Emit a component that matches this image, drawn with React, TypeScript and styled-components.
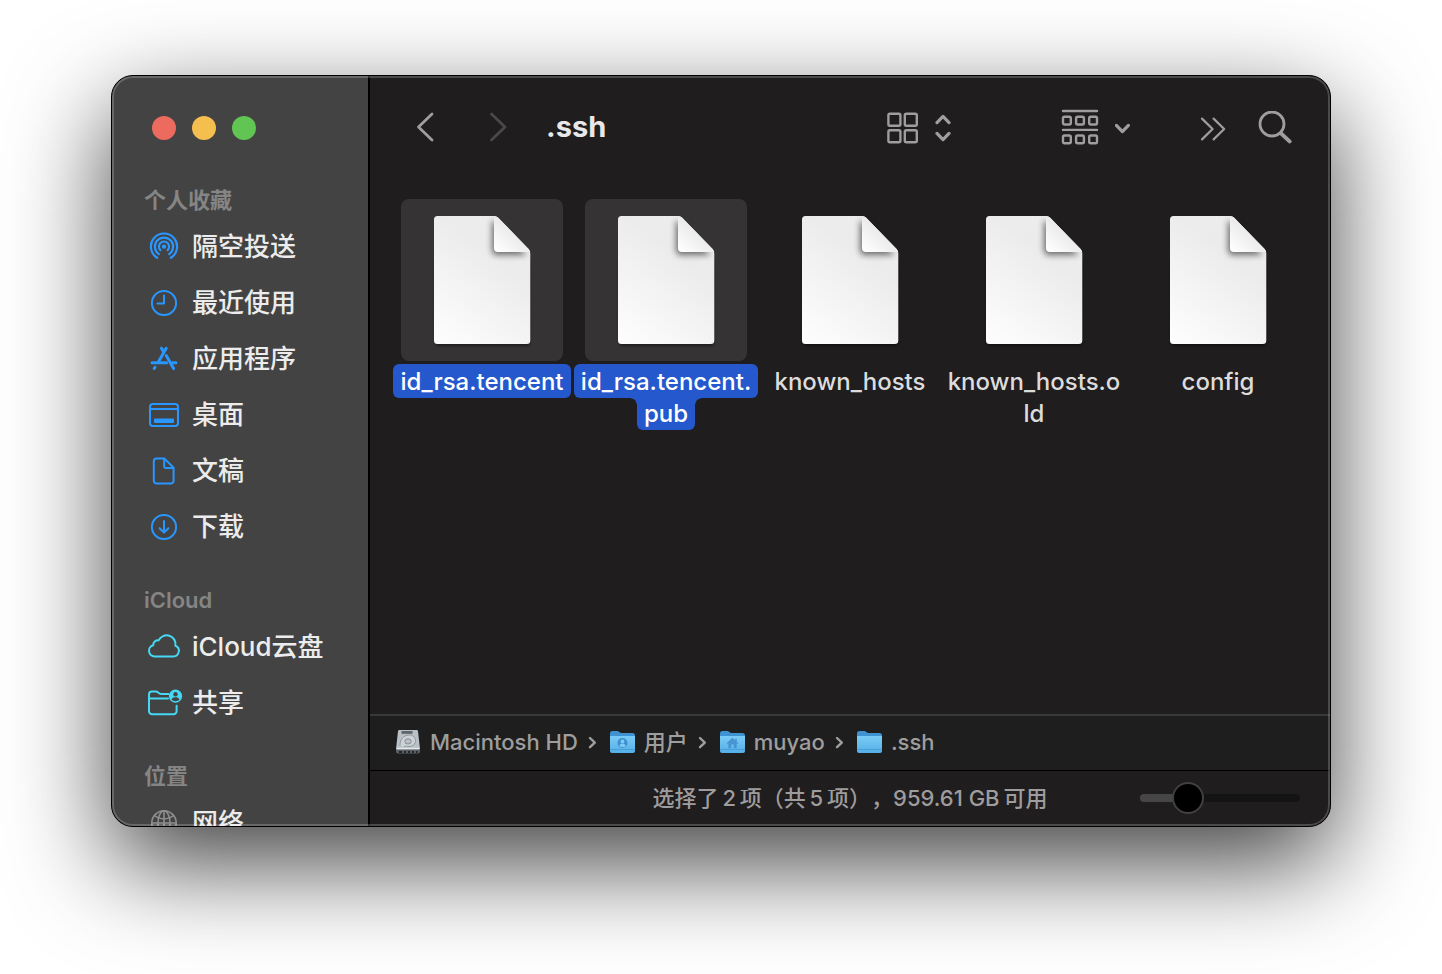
import React from 'react';
import styled, { createGlobalStyle, css } from 'styled-components';

const GlobalStyle = createGlobalStyle`
  * { box-sizing: border-box; }
  body { margin: 0; background: #ffffff; }
  button, input { font: inherit; color: inherit; }
`;

const Desktop = styled.div`
  display: flex;
  height: 100vh;
  padding: 75px 111px 147px;
  overflow: hidden;
  font-family: Inter, 'Noto Sans CJK SC', sans-serif;
  font-weight: 500;
`;

const Window = styled.main`
  position: relative;
  display: flex;
  flex: 1;
  min-width: 0;
  border: 1px solid #000000;
  border-radius: 22px;
  background: #1f1d1e;
  overflow: hidden;
  box-shadow: 0 36px 100px rgba(0, 0, 0, 0.75);

  &::after {
    content: '';
    position: absolute;
    inset: 0;
    border: 2px solid rgba(255, 255, 255, 0.2);
    border-radius: 21px;
    pointer-events: none;
  }
`;

const Sidebar = styled.aside`
  flex: 0 0 258px;
  overflow: hidden;
  border-right: 2px solid #000000;
  background: #434343;
`;

const WindowControls = styled.div`
  display: flex;
  gap: 16px;
  height: 105px;
  padding: 40px 0 0 40px;
`;

const ControlDot = styled.button<{ $color: string }>`
  width: 24px;
  height: 24px;
  padding: 0;
  border: 0;
  border-radius: 50%;
  background: ${(p) => p.$color};
`;

const Section = styled.section`
  margin-bottom: 26px;
`;

const SectionTitle = styled.h2`
  margin: 0;
  padding-left: 32px;
  font-size: 22px;
  font-weight: 600;
  line-height: 38px;
  color: #858585;
`;

const SideList = styled.ul`
  margin: 0;
  padding: 0;
  list-style: none;
`;

const SideLink = styled.a`
  display: flex;
  align-items: center;
  gap: 8px;
  height: 56px;
  padding-left: 32px;
  font-size: 26px;
  line-height: 56px;
  color: #ececec;
  white-space: nowrap;
  text-decoration: none;
`;

const SideIcon = styled.svg<{ $color: string }>`
  flex: none;
  width: 40px;
  height: 32px;
  color: ${(p) => p.$color};
  fill: none;
  stroke: currentColor;
  stroke-width: 2;
  stroke-linecap: round;
  stroke-linejoin: round;
`;

const Content = styled.div`
  display: flex;
  flex: 1;
  flex-direction: column;
  min-width: 0;
`;

const Toolbar = styled.header`
  display: flex;
  align-items: center;
  justify-content: space-between;
  height: 104px;
  padding: 0 38px;
`;

const NavGroup = styled.div`
  display: flex;
  align-items: center;
  gap: 39px;
`;

const ActionGroup = styled.div<{ $gap: number }>`
  display: flex;
  align-items: center;
  gap: ${(p) => p.$gap}px;
`;

const ToolButton = styled.button`
  display: flex;
  align-items: center;
  gap: 16px;
  padding: 0;
  border: 0;
  background: none;
  color: #9f9d9e;

  &:disabled { color: #4a4849; }

  svg {
    display: block;
    fill: none;
    stroke: currentColor;
    stroke-linecap: round;
    stroke-linejoin: round;
  }
`;

const Title = styled.h1`
  margin: 0 0 2px -8px;
  font-size: 29px;
  font-weight: 700;
  line-height: 36px;
  color: #e9e8e9;
`;

const FileGrid = styled.ul`
  display: grid;
  flex: 1;
  grid-template-columns: repeat(auto-fill, 184px);
  align-content: start;
  min-height: 0;
  margin: 0;
  padding: 19px 0 0 20px;
  overflow: hidden;
  list-style: none;
`;

const FileItem = styled.li`
  display: flex;
  flex-direction: column;
  align-items: center;
  gap: 3px;
`;

const IconTile = styled.div<{ $selected: boolean }>`
  width: 162px;
  height: 162px;
  border-radius: 8px;
  background: ${(p) => (p.$selected ? '#353334' : 'transparent')};

  svg { display: block; }
`;

const FileName = styled.div`
  display: flex;
  flex-direction: column;
  align-items: center;
  font-size: 24px;
  line-height: 32px;
  color: #dddcdd;
`;

const selectedLine = css`
  background: #2458cc;
  color: #ffffff;

  &:first-child { border-radius: 6px; }

  & + &::before,
  & + &::after {
    content: '';
    position: absolute;
    top: 0;
    width: 6px;
    height: 6px;
  }
  & + &::before {
    right: 100%;
    background: radial-gradient(circle at 0 100%, transparent 5px, #2458cc 6px);
  }
  & + &::after {
    left: 100%;
    background: radial-gradient(circle at 100% 100%, transparent 5px, #2458cc 6px);
  }
`;

const NameLine = styled.span<{ $selected: boolean }>`
  position: relative;
  padding: 0 7px;
  border-radius: 0 0 6px 6px;

  &:first-child { padding-top: 2px; }
  ${(p) => p.$selected && selectedLine}
`;

const PathBar = styled.nav`
  display: flex;
  align-items: center;
  height: 56px;
  padding: 0 0 2px 24px;
  border-top: 2px solid #3a3939;
  background: #1e1e1e;
  font-size: 22px;
  line-height: 32px;
  color: #9e9e9e;
`;

const Crumb = styled.a`
  display: flex;
  align-items: center;
  gap: 8px;
  color: inherit;
  text-decoration: none;
  white-space: nowrap;

  svg { display: block; }
`;

const CrumbArrow = styled.svg`
  width: 30px;
  height: 16px;
  fill: none;
  stroke: #9e9e9e;
  stroke-width: 2.4;
  stroke-linecap: round;
  stroke-linejoin: round;
`;

const StatusBar = styled.footer`
  display: grid;
  grid-template-columns: 1fr auto 1fr;
  align-items: center;
  height: 56px;
  padding: 0 30px 2px;
  border-top: 1px solid #000000;
`;

const StatusText = styled.p`
  grid-column: 2;
  margin: 0;
  font-size: 22px;
  line-height: 32px;
  color: #9e9c9d;
  white-space: nowrap;
  text-spacing-trim: space-all;
`;

const SizeSlider = styled.input`
  justify-self: end;
  width: 160px;
  height: 32px;
  margin: 0;
  appearance: none;
  background: transparent;

  &::-webkit-slider-runnable-track {
    height: 8px;
    border-radius: 4px;
    background: linear-gradient(to right, #464646 30%, #141414 30%);
  }
  &::-webkit-slider-thumb {
    width: 32px;
    height: 32px;
    margin-top: -12px;
    appearance: none;
    border: 2px solid #424041;
    border-radius: 50%;
    background: #000000;
  }
`;

const BLUE = '#2997ff';
const CYAN = '#45d9f5';
const GRAY = '#8e8e8e';

const AirDropIcon = () => (
  <SideIcon $color={BLUE} viewBox="0 0 40 32">
    <g strokeWidth="2.2">
      <circle cx="20" cy="15.600" r="2.200" fill="currentColor" stroke="none" />
      <path d="M16.400 19.200a5.100 5.100 0 1 1 7.200 0" />
      <path d="M14.800 23.100a9.100 9.100 0 1 1 10.400 0" />
      <path d="M13.200 26.800a13.100 13.100 0 1 1 13.600 0" />
    </g>
  </SideIcon>
);

const ClockIcon = () => (
  <SideIcon $color={BLUE} viewBox="0 0 40 32">
    <circle cx="20" cy="16" r="12.1" />
    <path d="M20 8.5v8h-6.6" />
  </SideIcon>
);

const AppsIcon = () => (
  <SideIcon $color={BLUE} viewBox="0 0 40 32">
    <g strokeWidth="3">
      <path d="M22.2 5.2 14.4 19" />
      <path d="M17.4 5.2l2.2 3.6" />
      <path d="M22.2 12.6l7.4 13" />
      <path d="M8 19.8h14.6M28.4 19.8h3.6" />
      <path d="M11 24.2l-.8 1.4" />
    </g>
  </SideIcon>
);

const DesktopIcon = () => (
  <SideIcon $color={BLUE} viewBox="0 0 40 32">
    <rect x="6" y="5" width="28" height="22" rx="3" />
    <path d="M6 10h28" />
    <rect x="10" y="19.6" width="20" height="4.4" rx="1" fill="currentColor" stroke="none" />
  </SideIcon>
);

const DocumentIcon = () => (
  <SideIcon $color={BLUE} viewBox="0 0 40 32">
    <path d="M12.6 3.4h7.6l9.4 9.4v13a2.8 2.8 0 0 1-2.8 2.8H12.6a2.8 2.8 0 0 1-2.8-2.8V6.2a2.8 2.8 0 0 1 2.8-2.8z" />
    <path d="M20.2 3.8v7.6a1.6 1.6 0 0 0 1.6 1.6h7.4" />
  </SideIcon>
);

const DownloadIcon = () => (
  <SideIcon $color={BLUE} viewBox="0 0 40 32">
    <circle cx="20" cy="16" r="12.1" />
    <path d="M20 10v11.4M15.6 17.2l4.4 4.4 4.4-4.4" />
  </SideIcon>
);

const CloudIcon = () => (
  <SideIcon $color={CYAN} viewBox="0 0 40 32">
    <path d="M10.600 25.400h18.800a5.500 5.500 0 0 0 2-10.600 8.900 8.900 0 0 0-16.800-5.400 4.700 4.700 0 0 0-5.400 4.800A5.700 5.700 0 0 0 10.600 25.400z" />
  </SideIcon>
);

const SharedIcon = () => (
  <SideIcon $color={CYAN} viewBox="0 0 40 32">
    <path d="M32.600 18.800v5.400a3 3 0 0 1-3 3H8a3 3 0 0 1-3-3V7.600a3 3 0 0 1 3-3h3.800c1 0 1.600.3 2.300.9l1 .8c.6.5 1 .6 1.800.6h7.500" />
    <path d="M5.400 11.600h18.600" />
    <circle cx="31.500" cy="9.200" r="6.600" fill="currentColor" stroke="none" />
    <circle cx="31.500" cy="7.200" r="2.200" fill="#434343" stroke="none" />
    <path d="M27.500 12.800c.6-2 2.200-2.600 4-2.600s3.400.6 4 2.600c-2 1.800-6 1.800-8 0z" fill="#434343" stroke="none" />
  </SideIcon>
);

const GlobeIcon = () => (
  <SideIcon $color={GRAY} viewBox="0 0 40 32">
    <g strokeWidth="1.6">
      <circle cx="20" cy="16" r="12.2" />
      <ellipse cx="20" cy="16" rx="6" ry="12.2" />
      <path d="M20 4v24M8 16h24M10.500 8.500c5 4.400 14 4.400 19 0" />
    </g>
  </SideIcon>
);

const DocumentArt = () => (
  <svg width="162" height="162" viewBox="0 0 162 162" aria-hidden="true">
    <defs>
      <linearGradient id="paper" gradientUnits="userSpaceOnUse" x1="45" y1="145" x2="115" y2="55">
        <stop offset="0" stopColor="#fdfdfd" />
        <stop offset="0.9" stopColor="#ebebeb" />
        <stop offset="1" stopColor="#ececec" />
      </linearGradient>
      <linearGradient id="fold" gradientUnits="userSpaceOnUse" x1="96" y1="52" x2="111" y2="35">
        <stop offset="0" stopColor="#ffffff" />
        <stop offset="1" stopColor="#ececec" />
      </linearGradient>
      <clipPath id="sheet">
        <path d="M36.500 17H93q2.500 0 4.200 1.700L127.600 50q1.700 1.700 1.700 4.200v87.300a3.500 3.500 0 0 1-3.500 3.500H36.500a3.500 3.500 0 0 1-3.500-3.500v-121a3.500 3.500 0 0 1 3.500-3.500z" />
      </clipPath>
      <filter id="castShadow" x="-20%" y="-20%" width="140%" height="140%">
        <feGaussianBlur stdDeviation="1.5" />
      </filter>
      <filter id="foldShadow" x="-50%" y="-50%" width="200%" height="200%">
        <feGaussianBlur stdDeviation="3" />
      </filter>
    </defs>
    <rect x="34" y="60" width="95" height="86.500" rx="4" fill="#000000" opacity="0.5" filter="url(#castShadow)" />
    <g clipPath="url(#sheet)">
      <rect x="33" y="17" width="97" height="128" fill="url(#paper)" />
      <path d="M91 22v29q0 5 5 5h30L93 22z" fill="#000000" opacity="0.55" filter="url(#foldShadow)" />
      <path d="M93 17v32a4 4 0 0 0 4 4h33v-3L97 17z" fill="url(#fold)" />
    </g>
  </svg>
);

const DiskArt = () => (
  <svg width="28" height="28" viewBox="0 0 28 28" aria-hidden="true">
    <path d="M5.500 2h17a1.500 1.500 0 0 1 1.500 1.300L26 21H2L4 3.300A1.500 1.500 0 0 1 5.500 2z" fill="#b9c1c6" />
    <path d="M2 20.500h24v3a2 2 0 0 1-2 2H4a2 2 0 0 1-2-2z" fill="#5b6064" />
    <path d="M2.500 20.600h23" stroke="#e6eaec" strokeWidth="1.600" />
    <path d="M5 24h3M10 24h2M14 24h2M18 24h2M22 24h1.500" stroke="#232527" strokeWidth="2" />
    <rect x="7.500" y="3" width="11" height="2.800" fill="#5f6569" />
    <path d="M6 17.500c0-6 3.500-10.500 9-10.500 4 0 6.500 2.500 6.500 5.500 0 3.500-3 6-6.500 6-2 0-3-.8-5 .2" fill="#ccd3d7" stroke="#8f969a" strokeWidth="1" />
    <ellipse cx="14" cy="13.400" rx="3.200" ry="2.600" fill="#b9c1c6" stroke="#868c90" strokeWidth="1" />
  </svg>
);

const FolderArt = ({ kind }: { kind?: 'user' | 'home' }) => (
  <svg width="28" height="28" viewBox="0 0 28 28" aria-hidden="true">
    <defs>
      <linearGradient id="folderFront" x1="0" y1="0" x2="0" y2="1">
        <stop offset="0" stopColor="#7accf6" />
        <stop offset="1" stopColor="#55aee6" />
      </linearGradient>
    </defs>
    <path d="M2 5.500A2.500 2.500 0 0 1 4.500 3H9c1 0 1.500.3 2.200.9l.8.7c.4.300.8.400 1.400.400h11.100A2.500 2.500 0 0 1 27 7.500V12H2z" fill="#3f93d2" />
    <path d="M2 8h25v15a2 2 0 0 1-2 2H4a2 2 0 0 1-2-2z" fill="url(#folderFront)" />
    <path d="M2 21.500h25" stroke="#479fd9" strokeWidth="1" />
    {kind === 'user' && (
      <>
        <circle cx="14.500" cy="15" r="5" fill="#3f8fd0" />
        <circle cx="14.500" cy="13.500" r="1.900" fill="#7accf6" />
        <path d="M11.300 18c.4-2 1.600-2.300 3.200-2.300s2.800.3 3.200 2.300c-1.600 1.600-4.800 1.600-6.400 0z" fill="#7accf6" />
      </>
    )}
    {kind === 'home' && (
      <path
        d="M14.500 9.800l2.700 2.400v-1.400h1.600v2.900l1.700 1.500-.9.900-.9-.8v4.900h-2.900v-3.600h-2.600v3.600h-2.900v-4.900l-.9.800-.9-.9z"
        fill="#4795d3"
      />
    )}
  </svg>
);

const sections = [
  {
    title: '个人收藏',
    items: [
      { label: '隔空投送', Icon: AirDropIcon },
      { label: '最近使用', Icon: ClockIcon },
      { label: '应用程序', Icon: AppsIcon },
      { label: '桌面', Icon: DesktopIcon },
      { label: '文稿', Icon: DocumentIcon },
      { label: '下载', Icon: DownloadIcon },
    ],
  },
  {
    title: 'iCloud',
    items: [
      { label: 'iCloud云盘', Icon: CloudIcon },
      { label: '共享', Icon: SharedIcon },
    ],
  },
  { title: '位置', items: [{ label: '网络', Icon: GlobeIcon }] },
];

const files = [
  { lines: ['id_rsa.tencent'], selected: true },
  { lines: ['id_rsa.tencent.', 'pub'], selected: true },
  { lines: ['known_hosts'], selected: false },
  { lines: ['known_hosts.o', 'ld'], selected: false },
  { lines: ['config'], selected: false },
];

const crumbs = [
  { label: 'Macintosh HD', art: <DiskArt /> },
  { label: '用户', art: <FolderArt kind="user" /> },
  { label: 'muyao', art: <FolderArt kind="home" /> },
  { label: '.ssh', art: <FolderArt /> },
];

export default function App() {
  return (
    <>
      <GlobalStyle />
      <Desktop>
        <Window>
          <Sidebar>
            <WindowControls>
              <ControlDot $color="#ed6a5f" aria-label="关闭" />
              <ControlDot $color="#f5bf4f" aria-label="最小化" />
              <ControlDot $color="#61c554" aria-label="缩放" />
            </WindowControls>
            {sections.map(({ title, items }) => (
              <Section key={title}>
                <SectionTitle>{title}</SectionTitle>
                <SideList>
                  {items.map(({ label, Icon }) => (
                    <li key={label}>
                      <SideLink href="#">
                        <Icon />
                        {label}
                      </SideLink>
                    </li>
                  ))}
                </SideList>
              </Section>
            ))}
          </Sidebar>

          <Content>
            <Toolbar>
              <NavGroup>
                <ToolButton aria-label="后退">
                  <svg width="34" height="34" viewBox="0 0 34 34" strokeWidth="2.8">
                    <path d="M24 3 10.500 16 24 29" />
                  </svg>
                </ToolButton>
                <ToolButton aria-label="前进" disabled>
                  <svg width="34" height="34" viewBox="0 0 34 34" strokeWidth="2.8">
                    <path d="M10.500 3 24 16 10.500 29" />
                  </svg>
                </ToolButton>
                <Title>.ssh</Title>
              </NavGroup>
              <ActionGroup $gap={69}>
                <ActionGroup $gap={110}>
                  <ToolButton aria-label="显示方式" aria-haspopup="menu">
                    <svg width="32" height="36" viewBox="0 0 32 36" strokeWidth="2.4">
                      <rect x="1.400" y="3.800" width="12" height="12" rx="1.500" />
                      <rect x="17.800" y="3.800" width="12" height="12" rx="1.500" />
                      <rect x="1.400" y="20.200" width="12" height="12" rx="1.500" />
                      <rect x="17.800" y="20.200" width="12" height="12" rx="1.500" />
                    </svg>
                    <svg width="16" height="36" viewBox="0 0 16 36" strokeWidth="3.2">
                      <path d="M2 12.600 8 6.400l6 6.200M2 23.400l6 6.200 6-6.200" />
                    </svg>
                  </ToolButton>
                  <ToolButton aria-label="分组" aria-haspopup="menu">
                    <svg width="38" height="38" viewBox="0 0 38 38" strokeWidth="2.4">
                      <path d="M2 2h34M2 20.900h34" />
                      <rect x="2" y="7.700" width="7.800" height="7.800" rx="1.500" />
                      <rect x="15.100" y="7.700" width="7.800" height="7.800" rx="1.500" />
                      <rect x="28.200" y="7.700" width="7.800" height="7.800" rx="1.500" />
                      <rect x="2" y="26.500" width="7.800" height="7.800" rx="1.500" />
                      <rect x="15.100" y="26.500" width="7.800" height="7.800" rx="1.500" />
                      <rect x="28.200" y="26.500" width="7.800" height="7.800" rx="1.500" />
                    </svg>
                    <svg width="16" height="36" viewBox="0 0 16 36" strokeWidth="3.2">
                      <path d="M1.400 15.400l6 6.200 6-6.200" />
                    </svg>
                  </ToolButton>
                </ActionGroup>
                <ActionGroup $gap={32}>
                  <ToolButton aria-label="更多工具">
                    <svg width="26" height="34" viewBox="0 0 26 34" strokeWidth="2.2">
                      <path d="M2 7.600 12.600 18 2 28.400M13.600 7.600 24.200 18 13.600 28.400" />
                    </svg>
                  </ToolButton>
                  <ToolButton aria-label="搜索">
                    <svg width="34" height="34" viewBox="0 0 34 34">
                      <circle cx="14" cy="13" r="12" strokeWidth="2.8" />
                      <path d="M23 22.400l8.600 8" strokeWidth="4" />
                    </svg>
                  </ToolButton>
                </ActionGroup>
              </ActionGroup>
            </Toolbar>

            <FileGrid>
              {files.map(({ lines, selected }) => (
                <FileItem key={lines.join('')}>
                  <IconTile $selected={selected}>
                    <DocumentArt />
                  </IconTile>
                  <FileName>
                    {lines.map((line) => (
                      <NameLine key={line} $selected={selected}>
                        {line}
                      </NameLine>
                    ))}
                  </FileName>
                </FileItem>
              ))}
            </FileGrid>

            <PathBar aria-label="路径">
              {crumbs.map(({ label, art }, i) => (
                <React.Fragment key={label}>
                  {i > 0 && (
                    <CrumbArrow viewBox="0 0 30 16">
                      <path d="M12 4l4.800 4.600L12 13.200" />
                    </CrumbArrow>
                  )}
                  <Crumb href="#">
                    {art}
                    {label}
                  </Crumb>
                </React.Fragment>
              ))}
            </PathBar>

            <StatusBar>
              <StatusText>选择了&#8201;2&#8201;项（共&#8201;5&#8201;项），959.61 GB&#8201;可用</StatusText>
              <SizeSlider type="range" min="0" max="100" defaultValue="25" aria-label="图标大小" />
            </StatusBar>
          </Content>
        </Window>
      </Desktop>
    </>
  );
}
